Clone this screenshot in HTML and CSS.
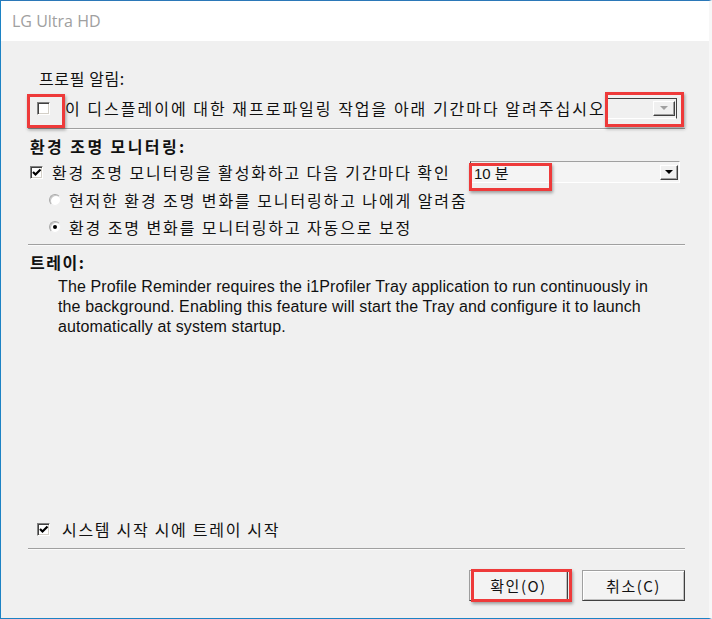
FILE: index.html
```html
<!DOCTYPE html>
<html>
<head>
    <title>LG Ultra HD</title>
    <link rel="stylesheet" href="styles.css">
</head>
<body>
    <div class="window">
        <div class="titlebar">LG Ultra HD</div>

        <div class="content">
            <div class="group-title indent">프로필 알림:</div>
            <div class="row row-reminder">
                <span class="mark-wrap">
                    <span class="checkbox"></span>
                    <span class="highlight hl-check"></span>
                </span>
                <span class="label">이 디스플레이에 대한 재프로파일링 작업을 아래 기간마다 알려주십시오</span>
                <span class="combo disabled">
                    <span class="combo-btn"><span class="arrow"></span></span>
                    <span class="highlight hl-combo1"></span>
                </span>
            </div>
            <div class="separator"></div>

            <div class="group-title bold">환경 조명 모니터링:</div>
            <div class="row row-monitor">
                <span class="checkbox checked">
                    <svg viewBox="0 0 11 11" width="11" height="11"><path d="M2 5 L4.5 7.5 L9.5 2.5" fill="none" stroke="#000" stroke-width="2.2"/></svg>
                </span>
                <span class="label">환경 조명 모니터링을 활성화하고 다음 기간마다 확인</span>
                <span class="combo interval">
                    <span class="combo-text">10 분</span>
                    <span class="combo-btn"><span class="arrow"></span></span>
                    <span class="highlight hl-combo2"></span>
                </span>
            </div>
            <div class="row radio-row">
                <span class="radio"></span>
                <span class="label">현저한 환경 조명 변화를 모니터링하고 나에게 알려줌</span>
            </div>
            <div class="row radio-row">
                <span class="radio selected"></span>
                <span class="label">환경 조명 변화를 모니터링하고 자동으로 보정</span>
            </div>
            <div class="separator sep-tray"></div>

            <div class="group-title tray-title">트레이:</div>
            <p class="tray-text">The Profile Reminder requires the i1Profiler Tray application to run continuously in the background. Enabling this feature will start the Tray and configure it to launch automatically at system startup.</p>

            <div class="spacer"></div>

            <div class="row row-startup">
                <span class="checkbox checked">
                    <svg viewBox="0 0 11 11" width="11" height="11"><path d="M2 5 L4.5 7.5 L9.5 2.5" fill="none" stroke="#000" stroke-width="2.2"/></svg>
                </span>
                <span class="label">시스템 시작 시에 트레이 시작</span>
            </div>
            <div class="separator sep-bottom"></div>

            <div class="buttons">
                <button class="btn">확인(O)<span class="highlight hl-ok"></span></button>
                <button class="btn">취소(C)</button>
            </div>
        </div>
    </div>
</body>
</html>
```

FILE: styles.css
```css
body {
    margin: 0;
    background: #f0f0f0;
    font-family: "Noto Sans CJK KR", "Noto Sans", sans-serif;
}
.window {
    width: 712px;
    height: 619px;
    box-sizing: border-box;
    border-top: 1px solid #2b78b8;
    border-left: 1px solid #1c82c4;
    border-bottom: 1px solid #1c82c4;
    border-right: 3px solid #f7f7f7;
    display: flex;
    flex-direction: column;
    overflow: hidden;
}
.titlebar {
    height: 40px;
    background: white;
    color: #a0a0a0;
    font-family: "Open Sans", "Noto Sans", sans-serif;
    font-size: 16px;
    line-height: 40px;
    padding-left: 11px;
}
.content {
    flex: 1;
    background: #f0f0f0;
    padding: 0 24px 17px 26px;
    display: flex;
    flex-direction: column;
    font-size: 16px;
    color: #111;
    letter-spacing: 1.9px;
}
.group-title {
    height: 20px;
    line-height: 20px;
    padding-left: 3px;
}
.group-title.indent {
    margin-top: 27px;
    padding-left: 12px;
    letter-spacing: 0.6px;
}
.group-title.bold {
    margin-top: 6px;
    font-weight: bold;
    letter-spacing: 2.4px;
}
.row {
    display: flex;
    align-items: center;
    white-space: nowrap;
}
.row-reminder {
    height: 26px;
    margin-top: 7px;
    padding-left: 10px;
}
.row-reminder .label {
    width: 541px;
    margin-left: 15px;
    letter-spacing: 2px;
}
.row-monitor {
    height: 22px;
    margin-top: 5px;
    padding-left: 3px;
}
.row-monitor .label {
    margin-left: 9px;
    width: 410px;
}
.radio-row {
    height: 20px;
    margin-top: 7px;
    padding-left: 22px;
}
.radio-row .label {
    margin-left: 8px;
}
.row-startup {
    height: 20px;
    padding-left: 10px;
}
.row-startup .label {
    margin-left: 12px;
    letter-spacing: 1.7px;
}
.separator {
    height: 1px;
    background: #a0a0a0;
    border-bottom: 1px solid #fbfbfb;
    margin: 7px 0 0 1px;
}
.sep-tray {
    margin-top: 7px;
}
.sep-bottom {
    margin-top: 9px;
}
.tray-title {
    margin-top: 6px;
    font-size: 16px;
    font-weight: 600;
    letter-spacing: 1.5px;
}
.tray-text {
    margin: 5px 0 0 31px;
    font-family: "Liberation Sans", Arial, sans-serif;
    font-size: 16px;
    line-height: 20px;
    letter-spacing: 0.12px;
    color: #111;
    width: 598px;
}
.spacer {
    flex: 1;
}

/* controls */
.mark-wrap {
    position: relative;
    display: inline-flex;
}
.checkbox {
    width: 13px;
    height: 13px;
    box-sizing: border-box;
    background: white;
    border-top: 1px solid #808080;
    border-left: 1px solid #808080;
    border-right: 1px solid #fff;
    border-bottom: 1px solid #fff;
    box-shadow: inset 1px 1px 0 #404040, inset -1px -1px 0 #d4d0c8;
    display: inline-flex;
    align-items: center;
    justify-content: center;
    flex-shrink: 0;
}
.checkbox svg {
    display: block;
}
.radio {
    width: 12px;
    height: 12px;
    box-sizing: border-box;
    border-radius: 50%;
    background: white;
    border: 1px solid #a8a8a8;
    border-right-color: #f0f0f0;
    border-bottom-color: #f0f0f0;
    box-shadow: inset 1px 1px 0 #c8c8c8;
    display: inline-flex;
    align-items: center;
    justify-content: center;
    flex-shrink: 0;
}
.radio.selected::after {
    content: "";
    width: 4px;
    height: 4px;
    border-radius: 50%;
    background: #000;
}
.combo {
    position: relative;
    display: flex;
    align-items: center;
    justify-content: flex-end;
    box-sizing: border-box;
}
.combo.disabled {
    width: 70px;
    height: 21px;
    margin-left: 1px;
    border-top: 1px solid #404040;
    border-right: 1px solid #404040;
    border-bottom: 1px solid #fff;
    padding-right: 1px;
}
.combo.interval {
    width: 210px;
    height: 22px;
    margin-left: 8px;
    border-top: 1px solid #a0a0a0;
    border-left: 1px solid #404040;
    border-right: 1px solid #fff;
    border-bottom: 1px solid #fff;
    background: #f4f4f4;
    padding-right: 1px;
}
.combo-text {
    flex: 1;
    padding-left: 3px;
    font-family: "Liberation Sans", "Noto Sans CJK KR", sans-serif;
    font-size: 15px;
    letter-spacing: 0;
}
.combo-btn {
    width: 18px;
    height: 15px;
    box-sizing: border-box;
    background: #f0f0f0;
    border-top: 1px solid #fff;
    border-left: 1px solid #fff;
    border-right: 1px solid #404040;
    border-bottom: 1px solid #404040;
    box-shadow: inset -1px -1px 0 #a0a0a0;
    display: flex;
    align-items: center;
    justify-content: center;
}
.combo.disabled .combo-btn {
    width: 22px;
}
.arrow {
    width: 0;
    height: 0;
    border-left: 4px solid transparent;
    border-right: 4px solid transparent;
    border-top: 4px solid #000;
}
.combo.disabled .arrow {
    border-top-color: #a0a0a0;
}
.buttons {
    display: flex;
    justify-content: flex-end;
    gap: 14px;
    margin-top: 20px;
}
.btn {
    position: relative;
    width: 99px;
    height: 31px;
    background: #f3f3f3;
    border: 1px solid #a0a0a0;
    border-right-color: #404040;
    border-bottom-color: #404040;
    box-shadow: inset 1px 1px 0 #fff, inset -1px -1px 0 #c0c0c0;
    font-family: "Noto Sans CJK KR", sans-serif;
    font-size: 15px;
    letter-spacing: 1.5px;
    color: #111;
    padding: 0;
}
.btn + .btn {
    width: 103px;
}

/* red annotation boxes */
.highlight {
    position: absolute;
    border: 3px solid #ee3a3a;
    box-shadow: 1px 2px 3px rgba(0,0,0,0.35);
    pointer-events: none;
}
.hl-check {
    left: -10px;
    top: -8px;
    width: 32px;
    height: 28px;
}
.hl-combo1 {
    left: -2px;
    top: -7px;
    width: 73px;
    height: 29px;
}
.hl-combo2 {
    left: -2px;
    top: 1px;
    width: 77px;
    height: 22px;
}
.hl-ok {
    left: 1px;
    top: -2px;
    width: 95px;
    height: 27px;
}
```
